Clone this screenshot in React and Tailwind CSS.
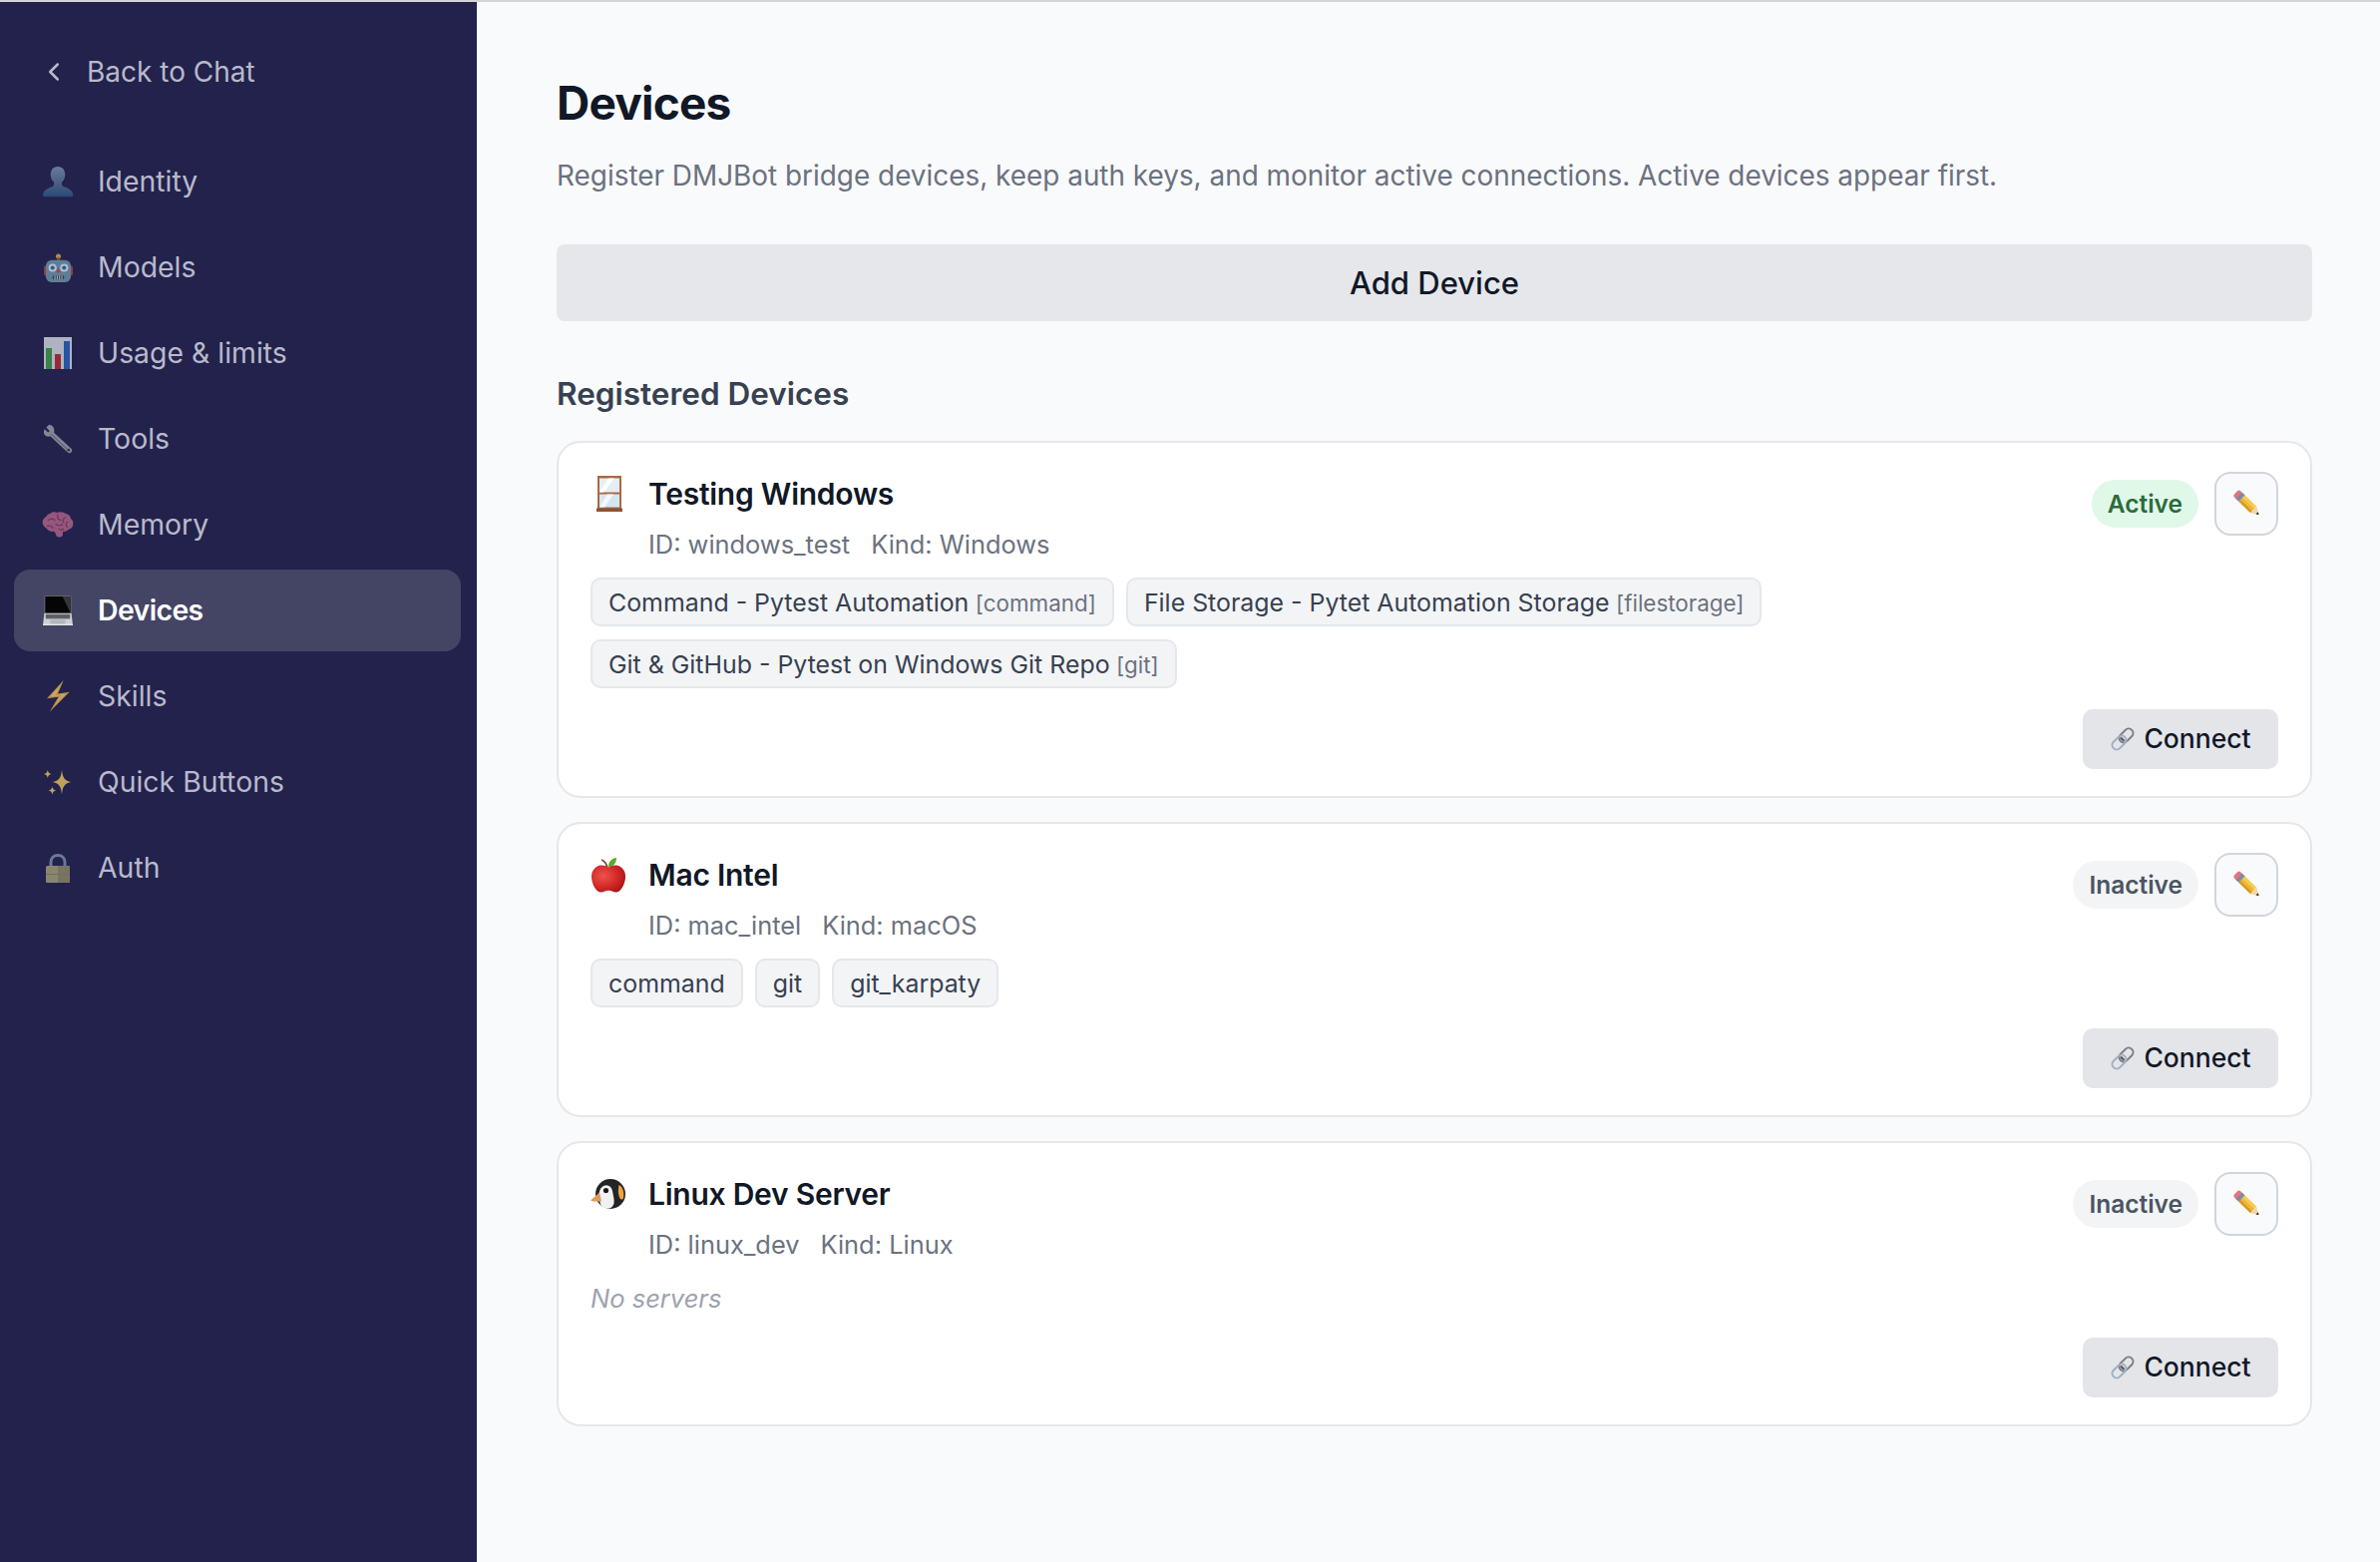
import { ChevronLeft } from "lucide-react";

const PersonIcon = () => (
  <svg viewBox="0 0 32 32" className="h-full w-full">
    <defs>
      <linearGradient id="personGrad" x1="0" y1="0" x2="0" y2="1">
        <stop offset="0" stopColor="#7d90b0" />
        <stop offset="1" stopColor="#2f5480" />
      </linearGradient>
    </defs>
    <path
      d="M16 1c4.600 0 7.300 3.600 7.300 8 0 3.200-1.400 6-3.300 7.600v2.200c0 1.400 1 2 3 2.800 4 1.600 7.600 3.200 8.300 7.600 0 1.600-.7 2-2 2H3c-1.300 0-2-.4-2-2 .7-4.400 4.300-6 8.300-7.600 2-.8 2.700-1.400 2.700-2.800v-2.200C10 15 8.700 12.200 8.700 9c0-4.400 2.700-8 7.300-8z"
      fill="url(#personGrad)"
    />
  </svg>
);

const RobotIcon = () => (
  <svg viewBox="0 0 30 30" className="h-full w-full">
    <circle cx="15" cy="3" r="2.600" fill="#e0a83c" />
    <rect x="13.800" y="4" width="2.400" height="4" fill="#8a6a3a" />
    <rect x="0" y="13" width="3" height="10" rx="1.500" fill="#b0403c" />
    <rect x="27" y="13" width="3" height="10" rx="1.500" fill="#b0403c" />
    <rect x="2" y="7" width="26" height="23" rx="6" fill="#6d95ab" />
    <circle cx="9" cy="15" r="4.200" fill="#d7e6ee" />
    <circle cx="21" cy="15" r="4.200" fill="#d7e6ee" />
    <circle cx="9" cy="15" r="2.100" fill="#2c6f9e" />
    <circle cx="21" cy="15" r="2.100" fill="#2c6f9e" />
    <path d="M15 15l2.500 5h-5z" fill="#c84a3f" />
    <rect x="9" y="23" width="12" height="4" rx="1.500" fill="#39444f" />
    <path d="M11.400 23v4M13.800 23v4M16.200 23v4M18.600 23v4" stroke="#c9d3da" strokeWidth="1.100" />
  </svg>
);

const ChartIcon = () => (
  <svg viewBox="0 0 28 32" className="h-full w-full">
    <rect width="28" height="32" fill="#d3d7dd" />
    <rect x="2" y="11" width="6" height="21" fill="#3f9a4a" />
    <rect x="11" y="17" width="6" height="15" fill="#b32d33" />
    <rect x="20" y="4" width="6" height="28" fill="#2a62b8" />
  </svg>
);

const WrenchIcon = () => (
  <svg viewBox="0 0 32 32" className="h-full w-full">
    <path
      d="M6.500 .8L3.600 3.800l3 3c.5.5.5 1.200 0 1.700-.5.500-1.200.5-1.700 0L1.900 5.500C.2 8.500 1 11.400 3.200 12.800c1.500.9 3.200 1 4.600.3l18.700 17.400c1.200 1.100 3 .9 4-.3.9-1.100.8-2.700-.2-3.700L11.800 9.200C12.600 6.800 12.100 4.300 10.400 2.500 9.300 1.500 8 .9 6.500.8z"
      fill="#9aa0aa"
    />
    <path d="M8.500 10.500L27 28" stroke="#6f7480" strokeWidth="1.300" />
    <circle cx="27.500" cy="28" r="1.500" fill="#3a3d4a" />
  </svg>
);

const BrainIcon = () => (
  <svg viewBox="0 0 32 28" className="h-full w-full">
    <path
      d="M8 2c2-2 5-2 7-1 3-1.500 7-.8 9 1.200 3 .3 5 2.300 5.500 5 2 1.500 3 4 2.200 6.800-.5 2.500-2.300 4-4.700 4.500-1.300 1.700-3.500 2.500-5.500 2-.5 1.500-.5 3-.5 4.500-1.500 2-5 2-6.500.5-.5-2-1-3.500-2.500-5-3 .5-6-.5-7.500-3C1.500 16 0 13.500 0 11 .2 8 2 6 4 5c.7-1.500 2.300-2.700 4-3z"
      fill="#b4648a"
    />
    <path
      d="M6 9c2-2 5-2 7 0M16 3c-1 3 0 5 3 6M24 6c-2 1-3 3-2 5M5 15c3-1 5 0 6 2M14 13c2 2 5 2 7 0M26 11c-2 1-2 4 0 5M17 18c1 1 3 1 5 0"
      stroke="#7e3e62"
      strokeWidth="1.300"
      fill="none"
      strokeLinecap="round"
    />
  </svg>
);

const LaptopIcon = () => (
  <svg viewBox="0 0 32 32" className="h-full w-full">
    <path d="M1.500 1.500C1.500 .7 2.100 0 3 0h26c.8 0 1.500.7 1.500 1.500V19h-29z" fill="#6a6a70" />
    <rect x="2.500" y="1" width="27" height="18" fill="#050505" />
    <path d="M21 1h8.500v18z" fill="#34343a" />
    <path d="M1.500 19h29L32 32H0z" fill="#cdd0d4" />
    <rect x="3" y="20" width="26" height="5" fill="#6a6d73" />
    <path d="M3 21.700h26M3 23.400h26" stroke="#45474d" strokeWidth=".6" />
    <rect x="8" y="26" width="16" height="5" fill="#b3b6bb" />
    <rect x="0" y="30.500" width="32" height="1.500" fill="#e3e5e8" />
  </svg>
);

const BoltIcon = () => (
  <svg viewBox="0 0 23 32" className="h-full w-full">
    <path d="M16.700 0L0 18.300l11.500-1.600L2.700 31.700 22.700 11.700 11 13.500z" fill="#e0a94f" />
    <path d="M13.500 5L3.500 16.500l11-1.500-7 10.500 11.500-12-10.500 1.500z" fill="#efcb6f" />
  </svg>
);

const SparklesIcon = () => (
  <svg viewBox="0 0 28 28" className="h-full w-full">
    <path d="M18 1.500c.6 8 3 11.500 9.500 12.500-6.500 1-8.900 4.500-9.500 12.500-.6-8-3-11.500-9.500-12.500 6.500-1 8.900-4.500 9.500-12.500z" fill="#e8c15e" />
    <path d="M3.800 2c.4 2.500 1.500 3.600 3.800 4-2.300.4-3.400 1.500-3.800 4-.4-2.500-1.500-3.600-3.800-4 2.300-.4 3.400-1.500 3.800-4z" fill="#e8c15e" />
    <path d="M8.400 18.500c.4 2.500 1.500 3.600 3.800 4-2.300.4-3.400 1.500-3.800 4-.4-2.500-1.500-3.600-3.800-4 2.300-.4 3.400-1.500 3.800-4z" fill="#e8c15e" />
  </svg>
);

const LockIcon = () => (
  <svg viewBox="0 0 24 29" className="h-full w-full">
    <path d="M5 13V8.500C5 4 8 1.500 12 1.500S19 4 19 8.500V13" fill="none" stroke="#7f8da8" strokeWidth="3" />
    <rect x="0" y="12" width="24" height="17" rx="1.500" fill="#a3a07a" />
    <rect x="12" y="12" width="12" height="17" fill="#8d8a68" />
    <rect x="0" y="20" width="24" height="1" fill="#87845f" />
  </svg>
);

const WindowIcon = () => (
  <svg viewBox="0 0 26 36" className="h-full w-full">
    <rect x="1" y="0" width="24" height="34" fill="#a86a45" />
    <rect x="0" y="32.500" width="26" height="3.500" fill="#8d5236" />
    <rect x="3" y="2.500" width="20" height="14" fill="#e4eff5" />
    <rect x="3" y="18.500" width="20" height="13" fill="#d6e6f0" />
    <path d="M3 16.500l9-14h6L7 16.500z" fill="#ffffff" />
    <path d="M3 31.500l8-13h6l-9 13z" fill="#f4f9fc" />
  </svg>
);

const AppleIcon = () => (
  <svg viewBox="0 0 36 36" className="h-full w-full">
    <defs>
      <radialGradient id="appleGrad" cx="0.35" cy="0.4" r="0.75">
        <stop offset="0" stopColor="#f0524a" />
        <stop offset="0.7" stopColor="#c8201f" />
        <stop offset="1" stopColor="#9a1414" />
      </radialGradient>
    </defs>
    <path d="M11 3c3 1 5 4 6 8" fill="none" stroke="#6b3f22" strokeWidth="1.600" />
    <path d="M18 9c0-5 5-8 8-8 0 5-3 9-8 9z" fill="#5ca82e" />
    <path
      d="M18 10.500c3-2 8-3 12-.5 4.500 3 6 8.500 4.500 14-1 4.500-4 11-8.500 11.500-3 .3-5-1.700-8-1.700s-5 2-8 1.700C5.500 35 2.500 28.500 1.500 24 0 18.500 1.500 13 6 10c4-2.500 9-1.500 12 .5z"
      fill="url(#appleGrad)"
    />
  </svg>
);

const PenguinIcon = () => (
  <svg viewBox="0 0 36 30" className="h-full w-full">
    <circle cx="20" cy="15" r="15" fill="#23242a" />
    <path d="M29 6c4 3 5 8 4 13-.5 2-2.500 2-3.500.5-1.500-3-2-7-1.500-10 .1-1.500.2-3 1-3.500z" fill="#eda33c" />
    <path d="M13 7c4-2 8 0 9 5 .8 5 2 8 1.500 12-.5 3.500-3 5.500-6 5.500-4.500 0-7-2-8-6l-1-7c0-4 1.500-8 4.500-9.500z" fill="#f1f1f1" />
    <circle cx="15.500" cy="11.500" r="2.600" fill="#18181c" />
    <path d="M9 13.500L0 21.500c3 1.500 8 1.500 11 .5z" fill="#e39a5a" />
  </svg>
);

const PencilIcon = () => (
  <svg viewBox="0 0 30 30" className="h-full w-full">
    <g transform="rotate(44 15 15)">
      <rect x="-1" y="10.500" width="7" height="9" rx="2.500" fill="#e0757e" />
      <rect x="3.500" y="10.500" width="4" height="9" fill="#7c8aa3" />
      <rect x="7.500" y="10.500" width="16" height="3" fill="#f7cc4a" />
      <rect x="7.500" y="13.500" width="16" height="3" fill="#f0b62d" />
      <rect x="7.500" y="16.500" width="16" height="3" fill="#d99a1e" />
      <path d="M23.500 10.500L31 15l-7.500 4.500z" fill="#f2d7a6" />
      <path d="M28.400 13.400L31 15l-2.600 1.600z" fill="#1f2028" />
    </g>
  </svg>
);

const LinkIcon = () => (
  <svg viewBox="0 0 26 26" className="h-full w-full">
    <g fill="none">
      <rect x="12" y="1.500" width="9" height="16" rx="4.500" transform="rotate(45 16.500 9.500)" stroke="#7a7e85" strokeWidth="2" />
      <rect x="5" y="8.500" width="9" height="16" rx="4.500" transform="rotate(45 9.500 16.500)" stroke="#9db0c4" strokeWidth="2" />
      <path d="M11 11.500l3.500 3.500" stroke="#5f5a55" strokeWidth="2.400" />
    </g>
  </svg>
);

const navItems = [
  { label: "Identity", icon: <PersonIcon />, size: "w-[32px] h-[32px]" },
  { label: "Models", icon: <RobotIcon />, size: "w-[29px] h-[29px]" },
  { label: "Usage & limits", icon: <ChartIcon />, size: "w-[28px] h-[32px]" },
  { label: "Tools", icon: <WrenchIcon />, size: "w-[32px] h-[30px]" },
  { label: "Memory", icon: <BrainIcon />, size: "w-[32px] h-[27px]" },
  { label: "Devices", icon: <LaptopIcon />, size: "w-[30px] h-[32px]", active: true },
  { label: "Skills", icon: <BoltIcon />, size: "w-[23px] h-[32px]" },
  { label: "Quick Buttons", icon: <SparklesIcon />, size: "w-[28px] h-[28px]" },
  { label: "Auth", icon: <LockIcon />, size: "w-[24px] h-[29px]" },
];

const devices = [
  {
    name: "Testing Windows",
    id: "windows_test",
    kind: "Windows",
    active: true,
    icon: <WindowIcon />,
    iconSize: "ml-[6px] w-[26px] h-[36px]",
    tags: [
      { text: "Command - Pytest Automation", kind: "[command]" },
      { text: "File Storage - Pytet Automation Storage", kind: "[filestorage]" },
      { text: "Git & GitHub - Pytest on Windows Git Repo", kind: "[git]" },
    ],
  },
  {
    name: "Mac Intel",
    id: "mac_intel",
    kind: "macOS",
    icon: <AppleIcon />,
    iconSize: "w-[36px] h-[36px]",
    tags: [{ text: "command" }, { text: "git" }, { text: "git_karpaty" }],
  },
  {
    name: "Linux Dev Server",
    id: "linux_dev",
    kind: "Linux",
    icon: <PenguinIcon />,
    iconSize: "w-[36px] h-[30px]",
    tags: [],
  },
];

const DeviceCard = ({ device }) => (
  <section className="rounded-[24px] border-[2.5px] border-[#e5e7eb] bg-white px-[32px] pt-[26px] pb-[27px]">
    <div className="flex items-start justify-between">
      <div>
        <div className="flex h-[50px] items-center">
          <span className="flex w-[58px] shrink-0">
            <span className={`block ${device.iconSize}`}>{device.icon}</span>
          </span>
          <h3 className="text-[30px] font-semibold tracking-[-0.25px] text-[#111827]">{device.name}</h3>
        </div>
        <p className="mt-[8px] ml-[58px] flex gap-[21px] text-[25.4px] leading-[36px] text-[#6b7280]">
          <span>ID: {device.id}</span>
          <span>Kind: {device.kind}</span>
        </p>
      </div>
      <div className="mt-[3px] flex items-center gap-[16px]">
        <span
          className={
            device.active
              ? "flex h-[48px] items-center rounded-full bg-[#e0f8e8] px-[16px] text-[24.5px] font-semibold text-[#2b6b3c]"
              : "flex h-[48px] items-center rounded-full bg-[#f3f4f6] px-[16px] text-[24.5px] font-semibold text-[#4b5563]"
          }
        >
          {device.active ? "Active" : "Inactive"}
        </span>
        <button className="flex h-[64px] w-[64px] items-center justify-center rounded-[16px] border-[2.5px] border-[#d1d5db] bg-[#f9fafb]">
          <span className="ml-[2px] block h-[30px] w-[30px]">
            <PencilIcon />
          </span>
        </button>
      </div>
    </div>

    {device.tags.length > 0 ? (
      <div className="mt-[15px] flex flex-wrap gap-x-[12px] gap-y-[13px]">
        {device.tags.map((tag) => (
          <span
            key={tag.text}
            className="flex h-[49px] items-center gap-[6.5px] rounded-[10px] border-[2px] border-[#e5e7eb] bg-[#f3f4f6] px-[16px] pt-[2px] text-[24.9px] text-[#374151]"
          >
            {tag.text}
            {tag.kind && <span className="text-[22.4px] text-[#6b7280]">{tag.kind}</span>}
          </span>
        ))}
      </div>
    ) : (
      <p className="mt-[18px] text-[25.5px] leading-[36px] text-[#9ca3af] italic">No servers</p>
    )}

    <div className="mt-[21px] flex justify-end">
      <button className="flex h-[60px] w-[196px] items-center justify-center gap-[8px] rounded-[10px] bg-[#e4e5e9] text-[26.5px] font-medium text-[#111827]">
        <span className="block h-[26px] w-[26px]">
          <LinkIcon />
        </span>
        Connect
      </button>
    </div>
  </section>
);

export default function App() {
  return (
    <div className="flex min-h-[1566px] border-t-2 border-[#d4d4d8] bg-[#f9fafb] font-['Inter',sans-serif]">
      <aside className="w-[478px] shrink-0 bg-[#22224c] pr-[16px] pl-[14px]">
        <a className="mt-[46px] flex h-[48px] items-center pl-[25px] text-[28px] text-[#b9b9cb]">
          <ChevronLeft size={30} strokeWidth={2} className="mr-[18px] shrink-0" />
          Back to Chat
        </a>
        <nav className="mt-[45px] flex flex-col gap-[4px]">
          {navItems.map((item) => (
            <a
              key={item.label}
              className={
                item.active
                  ? "flex h-[82px] items-center rounded-[16px] bg-[#444465] text-[28.4px] font-semibold tracking-[-0.6px] text-white"
                  : "flex h-[82px] items-center rounded-[16px] text-[28.4px] text-[#b9b9cb]"
              }
            >
              <span className="mr-[8px] ml-[12px] flex w-[64px] shrink-0 justify-center">
                <span className={`block ${item.size} ${item.active ? "" : "opacity-80"}`}>{item.icon}</span>
              </span>
              <span>{item.label}</span>
            </a>
          ))}
        </nav>
      </aside>

      <main className="min-w-0 flex-1 pt-[70px] pr-[68px] pl-[80px]">
        <h1 className="text-[46px] leading-[62px] font-bold tracking-[-0.8px] text-[#111827]">Devices</h1>
        <p className="mt-[22px] text-[27.9px] leading-[40px] text-[#6b7280]">
          Register DMJBot bridge devices, keep auth keys, and monitor active connections. Active devices appear first.
        </p>
        <button className="mt-[49px] h-[77px] w-full rounded-[8px] bg-[#e5e7eb] pt-[2px] text-[31px] font-medium text-[#111827]">
          Add Device
        </button>
        <h2 className="mt-[51px] text-[31.5px] leading-[44px] font-semibold text-[#374151]">Registered Devices</h2>
        <div className="mt-[25px] flex flex-col gap-[24px]">
          {devices.map((device) => (
            <DeviceCard key={device.id} device={device} />
          ))}
        </div>
      </main>
    </div>
  );
}
